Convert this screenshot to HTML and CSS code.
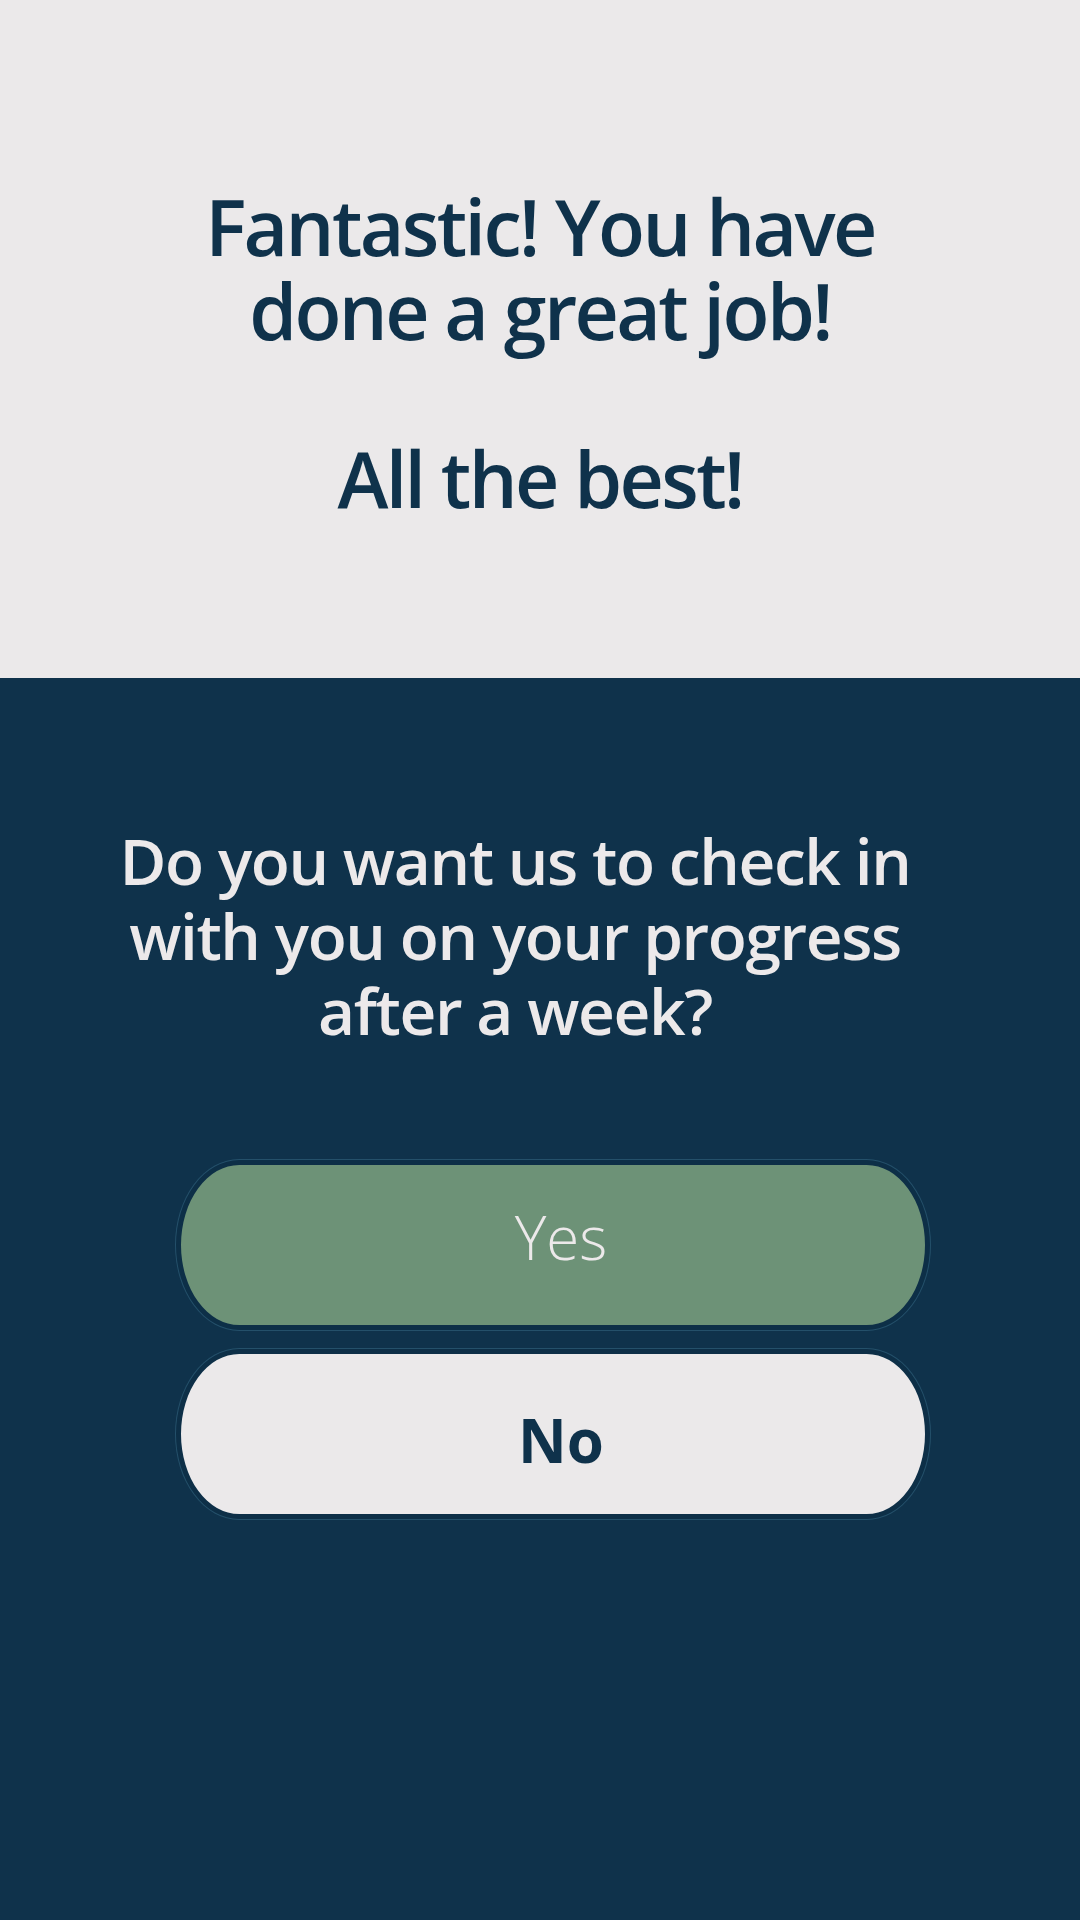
FILE: index.html
```html
<!DOCTYPE html>
<html lang="en">
<head>
<meta charset="utf-8">
<title>Check in</title>
<link rel="stylesheet" href="styles.css">
</head>
<body>
  <main class="screen">
    <section class="top">
      <h1 class="title">Fantastic! You have<br>done a great job!<br><br>All the best!</h1>
    </section>
    <section class="bottom">
      <h2 class="question">Do you want us to check in<br>with you on your progress<br>after a week?</h2>
      <div class="actions">
        <button class="btn btn-yes" type="button">Yes</button>
        <button class="btn btn-no" type="button">No</button>
      </div>
    </section>
  </main>
</body>
</html>
```

FILE: styles.css
```css
html, body {
  margin: 0;
  padding: 0;
}

body {
  width: 1080px;
  height: 1920px;
  background: #0F324B;
  font-family: "Open Sans", "Noto Sans", sans-serif;
}

.screen {
  display: flex;
  flex-direction: column;
  height: 1920px;
}

.top {
  height: 678px;
  box-sizing: border-box;
  background: #EBE9EA;
  padding-top: 185px;
}

.title {
  margin: 0;
  text-align: center;
  color: #0F324B;
  font-size: 77px;
  line-height: 84px;
  font-weight: 600;
  letter-spacing: -2.6px;
}

.bottom {
  flex: 1;
  background: #0F324B;
  padding-top: 145px;
}

.question {
  margin: 0;
  padding-right: 50px;
  text-align: center;
  color: #ECE9EA;
  font-size: 64px;
  line-height: 75px;
  font-weight: 600;
  letter-spacing: -1.4px;
}

.actions {
  display: flex;
  flex-direction: column;
  gap: 19px;
  margin-top: 112px;
  margin-left: 176px;
  width: 754px;
}

.btn {
  box-sizing: border-box;
  height: 170px;
  width: 100%;
  border: 5px solid #0D2F47;
  border-radius: 64px / 86px;
  box-shadow: 0 0 0 1px #24506A;
  font-family: "Open Sans", "Noto Sans", sans-serif;
  font-size: 60px;
  cursor: pointer;
}

.btn-yes {
  background: #6D9277;
  color: #ECE9EA;
  font-weight: 300;
  padding: 0 0 16px 16px;
}

.btn-no {
  background: #EBE9EA;
  color: #0F324B;
  font-weight: 700;
  padding: 12px 0 0 16px;
}
```
